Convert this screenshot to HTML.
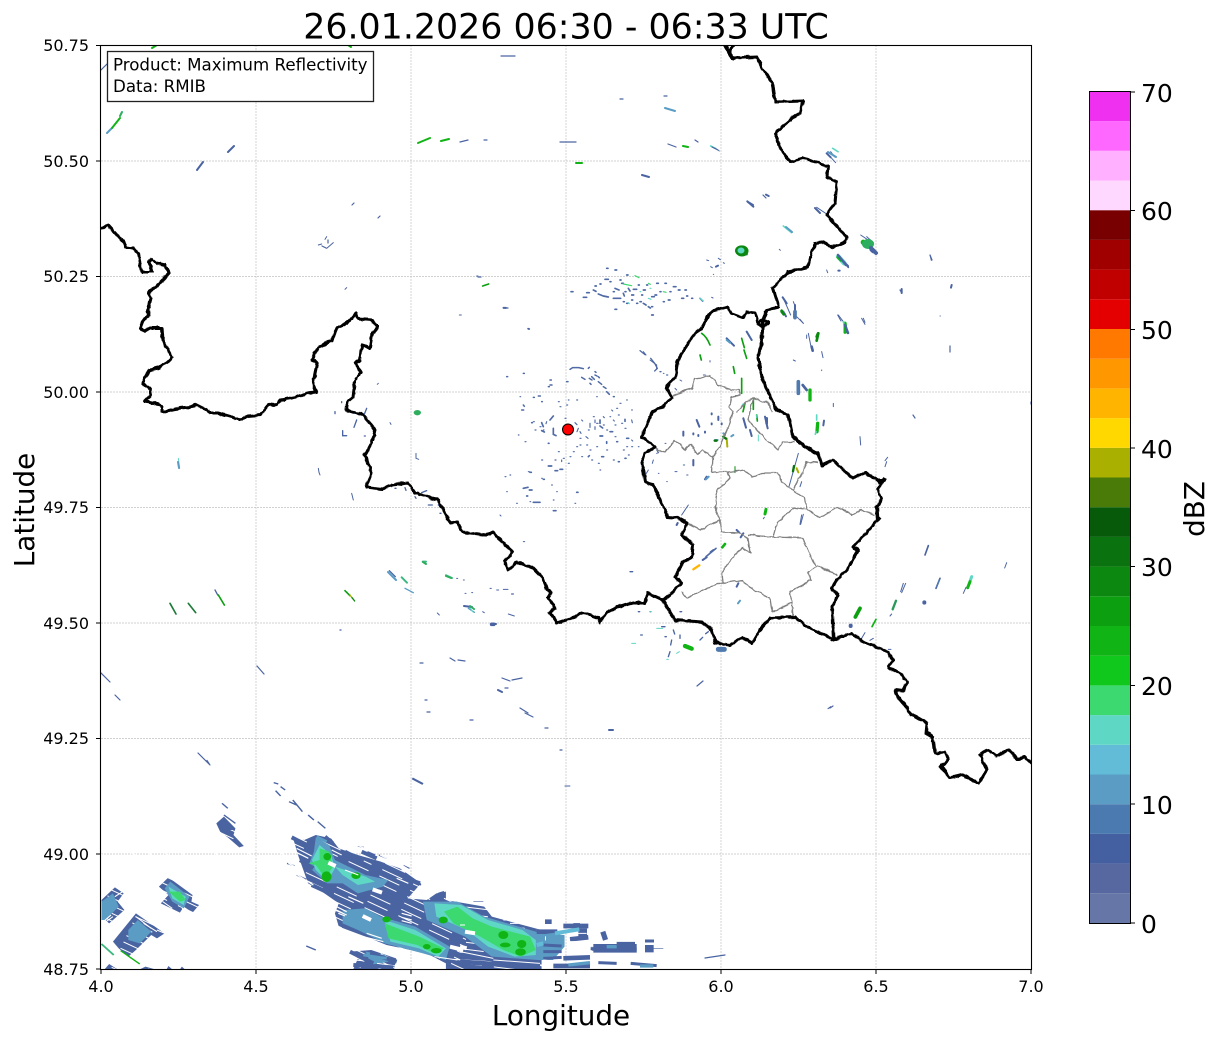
<!DOCTYPE html>
<html><head><meta charset="utf-8"><title>Radar</title>
<style>html,body{margin:0;padding:0;background:#fff}svg{display:block}text{font-family:"DejaVu Sans",sans-serif;fill:#000}</style></head>
<body>
<svg width="1219" height="1040" viewBox="0 0 1219 1040" xmlns="http://www.w3.org/2000/svg">
<defs><clipPath id="ax"><rect x="101" y="46" width="930" height="923"/></clipPath>
<pattern id="sl" patternUnits="userSpaceOnUse" width="34" height="7" patternTransform="rotate(25)"><path d="M0 3.500H22" stroke="#fff" stroke-width="1"/></pattern>
<pattern id="sr" patternUnits="userSpaceOnUse" width="38" height="7" patternTransform="rotate(7)"><path d="M0 3.500H26" stroke="#fff" stroke-width="1"/></pattern>
<filter id="wob" x="-2%" y="-2%" width="104%" height="104%" color-interpolation-filters="sRGB"><feTurbulence type="fractalNoise" baseFrequency=".14" numOctaves="2" seed="4"/><feDisplacementMap in="SourceGraphic" scale="3.500" xChannelSelector="R" yChannelSelector="G"/></filter>
</defs>
<g clip-path="url(#ax)">
<!-- grid -->
<path d="M256 45V969M411 45V969M566 45V969M721 45V969M876 45V969M101 161H1031M101 276.500H1031M101 392H1031M101 507.500H1031M101 623H1031M101 738.500H1031M101 854H1031" stroke="#c2c2c2" stroke-width=".7" stroke-dasharray="2 1" fill="none"/>

<!-- bottom storm base -->
<g transform="translate(90 760) scale(.3827 .33333)">
<path fill="#4a64a2" d="M530,232L560,240L590,225L630,235L650,265L700,285L760,305L810,325L865,370L830,415L880,420L905,400L930,395L930,420L1030,440L1050,470L1115,490L1180,510L1180,628L930,628L930,610L880,580L775,555L720,530L650,500L640,460L650,430L600,390L570,370L545,290Z"/>
<path fill="#4a64a2" d="M680,575L735,570L800,595L795,628H688L700,595Z"/>
<path fill="#4a64a2" d="M330,190L350,170L380,205L375,225L402,258L390,262L360,232L340,215Z"/>
<path fill="#4a64a2" d="M180,380L205,352L268,405L265,425L285,435L268,458L245,440L235,458L185,430L205,405Z"/>
<path fill="#4a64a2" d="M30,420L65,382L88,400L72,425L90,450L50,490L30,470Z"/>
<path fill="#4a64a2" d="M60,545L120,460L195,520L175,535L160,525L120,570L100,590L75,565Z"/>
<path fill="#4a64a2" d="M38,628L50,612L72,628ZM130,628L145,620L170,628ZM200,628L205,618L215,628ZM235,628L240,620L248,628Z"/>
</g>
<rect x="101" y="830" width="365" height="139" fill="url(#sl)"/>
<rect x="466" y="880" width="210" height="89" fill="url(#sr)"/>
<g transform="translate(90 760) scale(.3827 .33333)">
<path fill="#5a9cc4" d="M590,232L625,255L640,300L720,345L780,360L765,380L700,400L660,370L620,370L570,320L585,275Z"/>
<path fill="#5a9cc4" d="M660,450L720,445L760,470L850,500L940,560L930,600L870,580L770,550L700,510L660,490Z"/>
<path fill="#5a9cc4" d="M870,425L960,425L1030,470L1120,500L1180,520L1240,525L1240,560L1210,600L1170,600L1050,590L980,530L880,480Z"/>
<path fill="#5a9cc4" d="M720,575L770,585L780,605L735,615Z"/>
<path fill="#5a9cc4" d="M195,385L210,365L260,410L245,445L215,425Z"/>
<path fill="#5a9cc4" d="M30,425L60,400L75,440L40,480L30,480Z"/>
<path fill="#5a9cc4" d="M100,510L125,480L160,515L130,550L100,540Z"/>
<path fill="#5ed8c4" d="M600,255L630,285L640,325L620,365L590,330L580,300Z"/>
<path fill="#5ed8c4" d="M640,320L720,350L745,365L700,375L660,345Z"/>
<path fill="#5ed8c4" d="M770,480L850,510L930,565L910,590L860,565L785,545Z"/>
<path fill="#5ed8c4" d="M900,430L970,435L1040,480L1130,510L1165,540L1165,585L1110,590L1040,560L985,510L905,470Z"/>
<path fill="#5ed8c4" d="M205,380L250,410L245,435L215,415Z"/>
<path fill="#3cd870" d="M600,265L625,275L635,320L615,355L590,315L570,310L600,300Z"/>
<path fill="#3cd870" d="M770,490L860,530L925,565L900,580L855,555L780,535Z"/>
<path fill="#3cd870" d="M925,455L960,440L1000,475L1050,500L1150,530L1165,570L1125,590L1080,570L1020,530L950,490Z"/>
<path fill="#3cd870" d="M205,395L235,395L250,420L235,425Z"/>
<g fill="#10b414">
<ellipse cx="620" cy="290" rx="10" ry="11"/><ellipse cx="618" cy="350" rx="13" ry="16"/><ellipse cx="695" cy="347" rx="12" ry="10"/>
<ellipse cx="775" cy="478" rx="11" ry="9"/><ellipse cx="923" cy="480" rx="12" ry="10"/><ellipse cx="880" cy="560" rx="10" ry="8"/><ellipse cx="905" cy="572" rx="14" ry="8"/>
<ellipse cx="1080" cy="525" rx="13" ry="12"/><ellipse cx="1085" cy="555" rx="14" ry="7"/><ellipse cx="1128" cy="552" rx="12" ry="12"/><ellipse cx="1125" cy="576" rx="14" ry="11"/>
</g>
<g stroke="#fff" fill="none" stroke-width="3">
<path d="M30,495L60,470M35,485L55,465M65,410L85,395M190,425L215,445M175,510L195,520M240,445L270,460"/>
<path d="M120,470L160,505M140,490L175,515"/>
<path d="M950,598L1050,605M1000,585L1090,600M1100,610L1180,615M900,590L960,600"/>
<path d="M750,610L800,618M690,600L740,605"/>
</g>
<g stroke="#4a64a2" fill="none" stroke-width="4">
<path d="M515,310L535,318M540,345L565,358M700,258L715,262M725,275L745,285M755,285L775,295M820,315L835,325M825,350L865,375"/>
<path d="M480,68L492,72M498,80L510,90M485,92L498,108M520,125L540,135M530,120L555,155M570,165L585,180M595,185L615,205"/>
<path d="M345,130L360,145M350,165L380,190M565,558L590,570M910,400L925,395"/>
</g>
<path d="M842,55L870,72" stroke="#4a64a2" stroke-width="6"/>
<path d="M1240,78H1255" stroke="#4a64a2" stroke-width="3"/>
<path d="M305,0L312,12" stroke="#4a64a2" stroke-width="3" fill="none"/>
<path d="M30,552L62,585" stroke="#3cb880" stroke-width="5" fill="none"/>
<path d="M80,572L130,612" stroke="#10b414" stroke-width="4" fill="none"/>
</g>
<!-- left storm detail, crop (280,830) -->
<g transform="translate(280 830) scale(.33333)" fill="none">
<path stroke="#4a64a2" stroke-width="12" d="M35 22L85 48M60 38L100 60M135 20L158 40M195 65L250 95M245 65L290 85M290 100L340 125M375 145L420 160M305 190L355 205M210 365L280 400M270 370L350 395M220 405L340 412M60 90L100 115M95 165L160 195"/>
<path stroke="#5a9cc4" stroke-width="8" d="M250 375L320 385M110 20L140 35"/>
<path stroke="#fff" stroke-width="3.500" d="M50 55L95 78M45 65L85 85M45 130L100 165M25 100l20 10M160 225L200 245M160 238L200 255M175 250L195 258M175 290L235 320M250 320L310 335M260 310l45 15M365 250l30 8M365 262l30 8M365 272l30 8M205 200L250 220M365 100l25 12M365 120l25 10M350 145l35 15M230 45l20 8M300 75l20 10M155 60l30 15M195 120l40 15"/>
<path stroke="#fff" stroke-width="12" d="M145 98l22 10M278 178l28 10M248 258l25 12M510 350l40 10M555 305l30 5"/>
</g>
<!-- right storm detail, crop (460,880) -->
<g transform="translate(460 880) scale(.33333)" fill="none">
<path stroke="#4a64a2" stroke-width="14" d="M230 155H292M310 138H385M330 178L385 172M392 205L530 210M0 225L240 255M0 245L240 262M280 258H390M310 235L390 232M255 125h20"/>
<path stroke="#4a64a2" stroke-width="26" d="M368 145v30M425 170L440 165M400 205H530M568 195v22"/>
<path stroke="#4a64a2" stroke-width="9" d="M555 183H582M470 190H525M415 248L470 250M512 250L590 257M250 195L305 198M250 215L305 215M250 235L305 232"/>
<path stroke="#5a9cc4" stroke-width="18" d="M230 175L300 165"/>
<path stroke="#62bcd8" stroke-width="12" d="M285 160L358 148M230 195L250 190"/>
<path stroke="#5a9cc4" stroke-width="10" d="M440 200h30M325 255L390 248M250 225h30M540 258h40"/>
<path stroke="#fff" stroke-width="3" d="M330 160H380M340 200H400M360 212H395M0 135h15M330 185H360M415 222L530 226M250 240L300 245M0 215L100 235M100 240L240 250M60 70H75M130 120h45M150 130h25"/>
<path stroke="#fff" stroke-width="12" d="M0 200L20 205M255 175H258"/>
<path stroke="#4a64a2" stroke-width="2" d="M580 205h30M340 130h20M40 65h30"/>
</g>

<!-- scattered echoes near radar -->
<g transform="translate(500 260) scale(.33333)" fill="none" stroke-linecap="round">
<path stroke="#4f6aa5" stroke-width="5" d="M320 25h4M345 30h5M380 45h4M315 58h10M330 65h3M365 70h5M400 88h10M285 78h4M295 102l12 5M260 98h8M250 112h10M310 108l15 3M340 115h22M375 95h3M395 105h6M430 90h6M455 110h8M470 70h5M495 70h4M520 80h8M535 90h5M555 90h4M545 115h6M505 120h5M430 130l8 5M445 140l6 4M455 165h5M345 148h5M380 130h3M410 130h3M600 115l8 8M213 95h6M10 143h8M85 207h3M280 90l8 4M345 85l12 5M370 100l3 8M420 125h4M465 105h5M300 72h3M360 60h3M385 85l5 8M415 75h3M440 75h3M480 95h3M510 95h3M455 140h3M425 105h3M340 95h3M395 120h3M370 125h3M490 125h3M575 115h3M560 108h3"/>
<path stroke="#4f6aa5" stroke-width="4.500" d="M210 328l8 -5h18l14 3M245 352l10 6M268 355l8 5M285 345l6 3M295 365l10 8M320 395l8 8M340 410h3M265 325l3 -3M270 370l3 3M285 335l3 2M70 435l3 4M65 450h6M115 408h6M100 412h3M150 375h6M145 380h3M150 360h4M200 365h4M20 350h3M70 340h3M125 425h2M310 380l8 5M275 350l8 8M295 350l3 3"/>
<path stroke="#4f6aa5" stroke-width="5" d="M150 480l10 -12M125 488l5 12M125 512l8 4M160 505v18l8 4M95 488h2M300 480v10M300 498l8 6M330 515h8M375 478v6M380 535h6M300 528h8M320 545v5M350 545h3M265 590l3 -3M305 590h6M375 595h3M355 605h3M180 628h8M145 618h10M165 632h8M145 550h2M70 685l14 -3M88 690h8M80 708h3M90 637h4M130 658h3M100 727h20M160 752h8M230 697h4"/>
<path stroke="#4f6aa5" stroke-width="3.500" d="M225 488l6 6M235 505l-4 10M270 490v12M258 530l6 5M240 535h3M280 470h3M290 490h4M310 470l3 3M335 450l3 3M340 480l3 3M355 465h3M375 505h3M345 530h3M395 480l2 8M395 540l3 3M395 560h3M370 570h3M320 570h3M290 560h3M270 570h3M240 555h3M220 575h3M190 595h3M205 610h3M165 600h3M125 600h3M60 410h2M175 425h3M200 435h3M230 420h3M205 420h2M130 510h2M75 545h3M55 525h2M85 635h3M15 650h3M30 645h2M125 655h2M155 675h2M20 695h2M50 730h2M90 725h2M225 730h2M170 695h2M160 720h2M300 630h2M380 420h2M395 450h2M290 410h2M415 560h2M285 480v8M285 500v8M310 495h3M320 510h3M345 495h3M350 445h3M360 430h3M330 470h2M365 490h3M380 560h3M385 585h3M340 600h3M295 610h3M275 600h3M245 590h3M230 560h3M185 600v5M210 590h3M175 575h3M240 515l3 5M265 510h3M260 555h3M245 480l3 3M195 475h3M180 440h3M100 485h3M105 510h3M140 485l-2 6M120 500h3"/>
<path stroke="#3cd870" stroke-width="3.500" d="M405 47l12 6M370 72l25 5M445 70l6 3M490 95l8 2"/>
<path stroke="#5ed8c4" stroke-width="3.500" d="M420 95h3M450 85h3M445 115l8 3M600 115l10 8M385 128l3 3"/>
<path stroke="#4f6aa5" stroke-width="4" d="M420 272l15 12M452 295l12 15l8 15l-8 8M480 335h3M500 345h3"/>
</g>
<circle cx="568" cy="429.500" r="5.500" fill="#f00" stroke="#000" stroke-width="1"/>

<!-- Luxembourg area echoes -->
<g transform="translate(630 290) scale(.33333)" fill="none" stroke-linecap="round">
<path stroke="#0ca010" stroke-width="5" d="M215 130q15 10 25 35M335 145l8 28M342 180l8 25M210 195l4 15M310 230l4 20M335 265v45M345 340l-6 25M370 330v28M380 375l2 18"/>
<path stroke="#4a64a2" stroke-width="6" d="M290 145l22 22M350 125l15 25M405 380l8 35M340 385l8 28M360 420l5 18M200 390l8 20M160 425v12M190 510v16M190 430v3M205 435v3M225 425v3M245 400v3M245 370v3M265 380v10M275 400v3M230 560l-5 8M320 720l8 8M340 730l-8 12M250 780l-8 6M230 802l-12 8M325 880l-5 10M140 705l3 -6"/>
<path stroke="#4a64a2" stroke-width="3" d="M505 490l-28 100M175 645l-20 30M510 590l5 -15M515 675l-5 28M40 185l8 10M60 210l20 15v12M100 250h2M150 270l5 3M135 295l5 5M160 525h4M135 545h6M170 555h4M85 550h2M110 575h2M55 540l-6 10M70 510l-3 10M80 480l4 6M105 460h3M220 255h6M240 212v4M80 490l6 -2"/>
<path stroke="#5a9cc4" stroke-width="6" d="M280 430l5 5M310 435l-6 4M255 450h8M228 568l8 -8M330 932l-6 8M290 150l10 8"/>
<path stroke="#aab000" stroke-width="6" d="M290 445l2 25M500 535l5 12"/>
<path stroke="#0a720e" stroke-width="7" d="M492 528l-3 16M280 440l8 6M260 452h-6"/>
<path stroke="#0a8810" stroke-width="3" d="M315 530v18"/>
<path stroke="#ffb400" stroke-width="7" d="M190 838l18 -12"/>
<path stroke="#10b414" stroke-width="9" d="M408 658l-3 14"/><path stroke="#4a64a2" stroke-width="3" d="M403 682l-3 4"/>
<path stroke="#10b414" stroke-width="8" d="M285 762l-8 10"/>
<path stroke="#4f6aa5" stroke-width="5" d="M228 800l30 -25"/>
<path stroke="#5ed8c4" stroke-width="3" d="M385 435v18M380 375v8M340 340l-5 8"/>
<!-- east -->
<path stroke="#4a64a2" stroke-width="3" d="M460 25l22 50M490 35l6 15M500 80l20 20M625 75l15 20M695 85l10 18M535 130l8 40M575 185l4 18M610 340v10M690 440l2 25M765 512l8 -10M770 515l-5 15M820 880l-8 25M490 210l6 3M575 240v2"/>
<path stroke="#4f7ab0" stroke-width="11" d="M495 65v18M505 275v35"/>
<path stroke="#10b414" stroke-width="10" d="M645 100l3 25M540 300v30M563 400l-2 25"/>
<path stroke="#5ed8c4" stroke-width="5" d="M640 95l3 10M560 375v15M558 425l-2 8"/>
<path stroke="#4a64a2" stroke-width="8" d="M518 285l12 15M545 170l3 12M410 385v15"/>
<path stroke="#0a8810" stroke-width="8" d="M565 130l-5 22M455 62l8 10"/>
<path stroke="#4a64a2" stroke-width="6" d="M582 392l-2 14"/>
<!-- south -->
<path stroke="#4f7ab0" stroke-width="15" d="M265 1078h18"/>
<path stroke="#10b414" stroke-width="13" d="M165 1068l20 8"/>
<path stroke="#4a64a2" stroke-width="4" d="M130 1020l4 12M150 1035v10M125 1050l-3 15M95 1010h10M235 1025l-8 6M210 1050l8 -8M25 965h4M60 965h3M150 965h5M0 845h8M32 1035h5M105 1040h4M120 1085l-5 15"/>
<path stroke="#5ed8c4" stroke-width="3" d="M80 1015h18M110 1108h5M140 1090l8 -5M5 1060h12M60 965h3"/>
</g>

<!-- NE echoes -->
<g transform="translate(700 40) scale(.33333)" fill="none" stroke-linecap="round">
<path stroke="#5ed8c4" stroke-width="5" d="M32 318l14 7M398 325l16 10M250 558l25 20"/>
<path stroke="#4f7ab0" stroke-width="3" d="M46 325l12 8"/>
<path stroke="#4a64a2" stroke-width="6" d="M380 340l12 12M142 484l18 16M198 464l8 4M48 680l6 -3M415 692h4M605 747v12M755 735l-2 8M248 772l12 18M285 795v30M250 815l8 14"/>
<path stroke="#4a64a2" stroke-width="3" d="M392 335l12 16M395 355l12 13M350 502l30 20M690 645l4 16M720 828h1M380 690l3 8M20 660l6 2M55 655l6 4M70 668l3 2M32 680l5 3M40 703h1M238 628l3 3M275 228h3M35 772l4 2M490 835l5 12M413 825l10 18M300 838l10 12M482 585l30 20M500 590l20 18M320 885v10M140 875l10 15"/>
<ellipse cx="125" cy="632" rx="20" ry="16" fill="#0c8810"/>
<ellipse cx="125" cy="632" rx="12" ry="10" fill="#5ed8c4"/>
<path stroke="#4a64a2" stroke-width="7" d="M140 640v3"/>
<path stroke="#5ed8c4" stroke-width="14" d="M415 650l18 20"/>
<path stroke="#10b414" stroke-width="6" d="M412 652l10 10"/>
<path stroke="#4a64a2" stroke-width="5" d="M435 670l10 12"/>
<path stroke="#10b414" stroke-width="16" d="M490 607l10 8"/>
<path stroke="#4a64a2" stroke-width="14" d="M515 628l5 5"/>
<path stroke="#5a9cc4" stroke-width="5" d="M505 600l15 12"/>
<path stroke="#0a8810" stroke-width="8" d="M245 815l6 8M350 890l4 -10"/>
<path stroke="#10b414" stroke-width="9" d="M435 855v22"/>
<path stroke="#4f7ab0" stroke-width="10" d="M285 815l-1 15"/>
</g>

<!-- SE echoes -->
<g transform="translate(780 480) scale(.33333)" fill="none" stroke-linecap="round">
<path stroke="#4a64a2" stroke-width="5" d="M445 197l-10 28M480 295l-12 30"/>
<path stroke="#4a64a2" stroke-width="12" d="M433 367v1M212 437v1"/>
<path stroke="#5ed8c4" stroke-width="9" d="M575 290l-5 14"/>
<path stroke="#10b414" stroke-width="9" d="M570 305l-7 18"/>
<path stroke="#4a64a2" stroke-width="3" d="M558 322l-8 18M680 248l-6 16M377 310l-12 28M152 680l-8 6M335 402l-5 6M255 458l-15 25M280 475l-10 6M325 508h8M70 103l-8 30"/>
<path stroke="#2a9a5a" stroke-width="7" d="M348 362l-10 26"/>
<path stroke="#0ca010" stroke-width="11" d="M240 385l-14 26"/>
<path stroke="#10b414" stroke-width="5" d="M288 418l-12 22"/>
<path stroke="#4f7ab0" stroke-width="4" d="M478 300l-8 20"/>
</g>

<!-- W/S echoes zoom 7 -->
<g transform="translate(100 220) scale(.33333)" fill="none" stroke-linecap="round">
<path stroke="#1f7a3a" stroke-width="5" d="M210 1150l18 32M265 1150l22 28"/>
<path stroke="#0ca010" stroke-width="5" d="M355 1125l18 30M735 1112l15 15"/>
<path stroke="#aab000" stroke-width="4" d="M750 1125l6 8"/>
<path stroke="#0a8810" stroke-width="4" d="M756 1133l8 10"/>
<path stroke="#4a64a2" stroke-width="4" d="M345 1110l8 15M868 1052l18 18M1178 1213l5 2M1235 1122h5M720 1230h3"/>
<path stroke="#4a64a2" stroke-width="11" d="M1175 1213h6"/>
<path stroke="#3cb880" stroke-width="6" d="M905 1072l16 16M968 1025h10M1038 1066l18 8"/>
<path stroke="#5a9cc4" stroke-width="4" d="M915 1105l25 13M1105 1165l18 12"/>
<path stroke="#5ed8c4" stroke-width="3" d="M235 715l4 30M1108 1160l10 15"/>
<ellipse cx="952" cy="578" rx="11" ry="8" fill="#2fae60"/>
<path stroke="#0ca010" stroke-width="5" d="M1148 198l18 -6"/>
<path stroke="#4a64a2" stroke-width="3" d="M700 68l-20 17M655 75l10 -3M680 50l-5 8M655 745l2 12l3 8M755 820l5 20M835 490l-3 3M735 208l5 -5M1210 265h8M1283 325h3M1078 285h6M1130 168h4M948 700v15l8 3M1018 1185l-6 -6M1225 1182l18 6M1170 1105h4M1190 1110h6M1210 1108h14M1095 1120h3M1115 1118h3M1148 1175l5 3M1070 1075h3M1090 1080h3M1200 885l3 3M1270 965h4M870 608l3 5"/>
<path stroke="#4a64a2" stroke-width="4" d="M728 632v15h12M770 600l-8 22M760 580h22M800 565l-8 20M793 648h3M705 575v6M725 545v3M875 792v8M885 805h3M915 803l3 8M965 818l15 -6M945 830l3 5M985 855h12M1015 855l5 3M1020 880h3"/>
</g>

<!-- top & misc echoes -->
<g fill="none" stroke-linecap="round">
<path stroke="#4a64a2" stroke-width="1.200" d="M101 70l6 -6M152 48l4 -2M501 56h14M620 99h3M664 96h3M560 142h16M460 142l8 -2M484 140h3M668 144l8 3M695 140l3 2M712 147l6 3M763 195l3 3M352 205l2 -2M378 218l2 -2M322 246l4 2M328 240v3M930 255l2 5M900 290l2 3M950 346v6M913 415l2 3M1031 402v2M705 958l20 -3M830 708l3 -2M697 686l6 -5M505 308h3M478 277h3M420 663h3M450 658l5 3M458 660l7 1M502 678l8 3M512 680l10 -2M505 688h3M520 708l8 5M525 713l8 4M545 728h3M560 750h2M610 730h3M100 672l10 10M115 695l5 5M198 753l12 12M257 666l7 8M427 712h3M470 720h3M425 700h2"/>
<path stroke="#4a64a2" stroke-width="2" d="M748 202l5 3M228 152l6 -6M197 170l6 -8M642 175l7 2M815 208l5 5M840 258l8 8M609 730h4M498 690l4 2M464 606l8 1M492 624h4"/>
<path stroke="#5a9cc4" stroke-width="2" d="M107 133l5 -5M665 108l10 3M786 227l6 5M828 152l8 5M388 572l8 8M178 462l1 6"/>
<path stroke="#10b414" stroke-width="2" d="M112 128l8 -10M418 143l12 -5M441 141l8 -2M152 48l5 -3M348 45l3 2M576 163h6M683 146l5 1"/>
<path stroke="#2fae60" stroke-width="2" d="M120 116l2 -4M423 562l3 2M446 576l5 2M470 606l4 3"/>
<ellipse cx="868" cy="244" rx="6" ry="5" fill="#2fae60"/>
<path d="M871 248l5 5" stroke="#4a64a2" stroke-width="4"/>
<path d="M838 255l8 10M845 325l3 8" stroke="#4a64a2" stroke-width="2.500"/>
</g>

<!-- borders -->
<g fill="none" stroke="#808080" stroke-width="1.300" stroke-linejoin="round" filter="url(#wob)">
<path d="M672 396L682 392L692 388L695 379L702 378L710 375L718 385L730 389L738 390L740 395L732 398L729 407L733 412L730 423L725 435L720 447L713 457L712 472L728 472L730 478L718 490L715 507L720 520L700 530L688 524"/>
<path d="M655 447L658 450L665 452L675 440L685 450L690 444L698 455L703 450L713 457"/>
<path d="M720 520L722 532L740 533L748 538L750 553L742 548L733 557L722 573L723 583L707 588L687 598L682 592"/>
<path d="M723 583L743 580L750 588L770 598L772 612L792 603L793 617"/>
<path d="M792 603L790 592L812 580L807 573L817 565L837 575"/>
<path d="M748 535L773 537L803 538L815 565"/>
<path d="M773 537L777 523L793 508L807 510L820 518L838 507L853 515L860 510L875 515"/>
<path d="M807 510L805 498L793 490L782 482L778 473L762 473L752 477L745 470L728 472"/>
<path d="M793 490L807 462L818 463"/>
<path d="M753 398L748 420L760 433L778 450L783 442L795 442"/>
<path d="M753 398L768 403L773 412"/>
<path d="M737 413L745 403L753 398"/>
</g>
<g fill="none" stroke="#000" stroke-width="3" stroke-linejoin="round" stroke-linecap="round" filter="url(#wob)">
<path d="M101 229L108 225L116 234L124 243L126 247L133 248L138 253L140 263L142 272L152 272L149 262L152 259L157 263L165 265L169 273L163 280L155 288L148 293L151 298L148 310L149 316L143 320L140 328L145 331L150 328L162 328L163 340L167 348L172 357L171 360L162 365L158 368L150 370L142 383L150 390L151 395L145 401L155 403L162 407L162 412L180 408L190 407L197 405L207 410L210 413L218 413L232 417L239 420L248 416L260 415L268 405L277 404L280 400L297 397L307 393L316 392L313 383L317 363L312 360L318 347L332 340L337 328L348 322L356 313L358 319L372 320L378 327L372 333L370 348L363 345L361 350L360 360L355 363L361 372L355 380L353 397L347 402L346 410L363 415L375 430L373 440L365 455L367 463L371 468L370 477L366 487L382 489L393 485L408 483L415 493L438 500L448 518L450 523L457 522L462 532L487 535L493 532L502 542L513 552L505 562L508 570L517 562L533 568L543 578L547 590L551 592L548 598L555 608L550 613L557 623L575 617L582 612L598 618L600 622L606 613L618 607L633 603L645 603L648 593L663 600"/>
<path d="M663 600L673 592L682 583L675 577L683 562L692 557L693 545L682 535L687 523L678 518L668 517L658 495L653 485L645 482L642 463L645 453L655 447L642 437L652 412L663 407L672 398L666 387L675 378L678 360L692 337L702 328L710 312L728 307L732 314L743 318L747 312L755 313L758 323L763 328L768 322L763 320L758 323"/>
<path d="M663 600L670 612L675 620L702 622L712 630L715 643L730 645L742 638L752 643L760 630L770 618L795 617L812 630L834 639"/>
<path d="M725 45L732 58L757 57L762 68L772 82L775 102L803 101L800 113L793 118L775 133L780 148L790 162L803 158L828 166L827 177L837 182L835 203L827 215L847 237L845 242L833 247L822 242L815 243L810 257L808 267L788 272L773 288L779 307L767 310L763 320L762 340L758 358L762 377L767 390L772 400L777 410L788 415L793 437L810 450L818 453L822 465L833 460L852 478L865 473L878 480L883 480L878 490L882 498L877 507L878 520L867 532L853 547L858 550L847 570L837 580L832 588L838 595L832 607L834 639"/>
<path d="M733 45L730 50L732 58M832 640L852 633L863 642L888 652L893 660L888 667L902 675L907 683L903 691L895 690L897 697L905 703L908 712L927 723L926 733L933 737L935 753L945 752L948 758L941 767L950 778L962 775L979 783L987 770L980 755L987 750L997 756L1008 750L1018 759L1025 757L1031 763"/>
</g>
<path d="M878 483l6 -3l1 -2M878 518l2 2" stroke="#000" stroke-width="4"/>
<ellipse cx="742" cy="251" rx="6.500" ry="5.500" fill="#0c8810"/><ellipse cx="741" cy="250.500" rx="3.500" ry="3" fill="#5ed8c4"/>

<rect x="107.500" y="51.500" width="266" height="50" fill="#fff" stroke="#222" stroke-width="1.300"/>
<text x="113" y="70.500" font-size="16.670">Product: Maximum Reflectivity</text>
<text x="113" y="92" font-size="16.670">Data: RMIB</text>
</g>

<!-- frame + ticks -->
<rect x="100.500" y="45.500" width="931" height="924" fill="none" stroke="#000" stroke-width="1.100"/>
<path d="M101 969v5M256 969v5M411 969v5M566 969v5M721 969v5M876 969v5M1031 969v5M101 45.500h-5M101 161h-5M101 276.500h-5M101 392h-5M101 507.500h-5M101 623h-5M101 738.500h-5M101 854h-5M101 969h-5" stroke="#000" stroke-width="1" fill="none"/>

<g font-size="16" text-anchor="end">
<text x="89" y="51">50.75</text><text x="89" y="167">50.50</text><text x="89" y="282">50.25</text><text x="89" y="398">50.00</text><text x="89" y="513">49.75</text><text x="89" y="629">49.50</text><text x="89" y="744">49.25</text><text x="89" y="860">49.00</text><text x="89" y="975">48.75</text>
</g>
<g font-size="16" text-anchor="middle">
<text x="101" y="992">4.0</text><text x="256" y="992">4.5</text><text x="411" y="992">5.0</text><text x="566" y="992">5.5</text><text x="721" y="992">6.0</text><text x="876" y="992">6.5</text><text x="1031" y="992">7.0</text>
</g>

<text x="566" y="38.500" font-size="34.800" text-anchor="middle">26.01.2026 06:30 - 06:33 UTC</text>
<text x="561" y="1025" font-size="27.800" text-anchor="middle">Longitude</text>
<text transform="translate(34 510) rotate(-90)" font-size="27.800" text-anchor="middle">Latitude</text>

<!-- colorbar -->
<g>
<rect x="1090" y="893.300" width="41" height="30" fill="#6676a6"/>
<rect x="1090" y="863.600" width="41" height="29.700" fill="#56689f"/>
<rect x="1090" y="833.900" width="41" height="29.700" fill="#4560a0"/>
<rect x="1090" y="804.200" width="41" height="29.700" fill="#4a7ab0"/>
<rect x="1090" y="774.500" width="41" height="29.700" fill="#5a9cc4"/>
<rect x="1090" y="744.800" width="41" height="29.700" fill="#62bcd8"/>
<rect x="1090" y="715.100" width="41" height="29.700" fill="#5ed8c4"/>
<rect x="1090" y="685.400" width="41" height="29.700" fill="#3cd870"/>
<rect x="1090" y="655.700" width="41" height="29.700" fill="#10c81c"/>
<rect x="1090" y="626" width="41" height="29.700" fill="#10b414"/>
<rect x="1090" y="596.300" width="41" height="29.700" fill="#0ca010"/>
<rect x="1090" y="566.600" width="41" height="29.700" fill="#0c8810"/>
<rect x="1090" y="536.900" width="41" height="29.700" fill="#0a720e"/>
<rect x="1090" y="507.200" width="41" height="29.700" fill="#065a0a"/>
<rect x="1090" y="477.500" width="41" height="29.700" fill="#4a7a08"/>
<rect x="1090" y="447.800" width="41" height="29.700" fill="#aab000"/>
<rect x="1090" y="418.100" width="41" height="29.700" fill="#ffd800"/>
<rect x="1090" y="388.400" width="41" height="29.700" fill="#ffb400"/>
<rect x="1090" y="358.700" width="41" height="29.700" fill="#ff9800"/>
<rect x="1090" y="329" width="41" height="29.700" fill="#ff7800"/>
<rect x="1090" y="299.300" width="41" height="29.700" fill="#e40000"/>
<rect x="1090" y="269.600" width="41" height="29.700" fill="#c00000"/>
<rect x="1090" y="239.900" width="41" height="29.700" fill="#a00000"/>
<rect x="1090" y="210.200" width="41" height="29.700" fill="#780000"/>
<rect x="1090" y="180.500" width="41" height="29.700" fill="#ffd8ff"/>
<rect x="1090" y="150.800" width="41" height="29.700" fill="#ffb0ff"/>
<rect x="1090" y="121.100" width="41" height="29.700" fill="#ff68ff"/>
<rect x="1090" y="91.500" width="41" height="29.600" fill="#f030f0"/>
<rect x="1089.500" y="91.500" width="41" height="832" fill="none" stroke="#000" stroke-width="1"/>
<path d="M1130 92h5M1130 210.500h5M1130 329.500h5M1130 448h5M1130 566.500h5M1130 685.500h5M1130 804h5M1130 923h5" stroke="#000" stroke-width="1"/>
</g>
<g font-size="25">
<text x="1141" y="102">70</text><text x="1141" y="220">60</text><text x="1141" y="339">50</text><text x="1141" y="458">40</text><text x="1141" y="576">30</text><text x="1141" y="695">20</text><text x="1141" y="814">10</text><text x="1141" y="933">0</text>
</g>
<text transform="translate(1204 509) rotate(-90)" font-size="27.800" text-anchor="middle">dBZ</text>
</svg>
</body></html>
